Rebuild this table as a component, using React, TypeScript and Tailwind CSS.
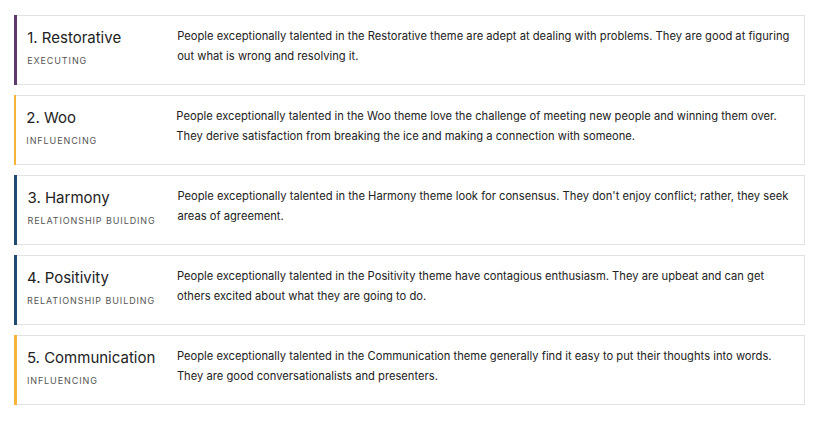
const themes = [
  {
    rank: 1,
    name: "Restorative",
    domain: "EXECUTING",
    bar: "bg-[#5e3a6e]",
    text: "People exceptionally talented in the Restorative theme are adept at dealing with problems. They are good at figuring out what is wrong and resolving it.",
  },
  {
    rank: 2,
    name: "Woo",
    domain: "INFLUENCING",
    bar: "bg-[#f6b53a]",
    text: "People exceptionally talented in the Woo theme love the challenge of meeting new people and winning them over. They derive satisfaction from breaking the ice and making a connection with someone.",
  },
  {
    rank: 3,
    name: "Harmony",
    domain: "RELATIONSHIP BUILDING",
    bar: "bg-[#1f4b73]",
    text: "People exceptionally talented in the Harmony theme look for consensus. They don't enjoy conflict; rather, they seek areas of agreement.",
  },
  {
    rank: 4,
    name: "Positivity",
    domain: "RELATIONSHIP BUILDING",
    bar: "bg-[#1f4b73]",
    text: "People exceptionally talented in the Positivity theme have contagious enthusiasm. They are upbeat and can get others excited about what they are going to do.",
  },
  {
    rank: 5,
    name: "Communication",
    domain: "INFLUENCING",
    bar: "bg-[#f6b53a]",
    text: "People exceptionally talented in the Communication theme generally find it easy to put their thoughts into words. They are good conversationalists and presenters.",
  },
];

function ThemeCard({ t }: { t: (typeof themes)[number] }) {
  return (
    <div className="flex h-[70px] border border-[#e2e2e2] bg-white">
      <div className={`w-[4px] -my-px -ml-px ${t.bar}`} />
      <div className="w-[160px] shrink-0 pl-[10px] pt-[12px]">
        <div className="text-[15px] leading-[20px] text-[#222]">
          {t.rank}. {t.name}
        </div>
        <div className="mt-[7px] text-[9px] leading-[12px] tracking-[0.1em] text-[#555]">{t.domain}</div>
      </div>
      <p className="pt-[10px] pr-[6px] text-[11.2px] leading-[20px] text-[#222]">{t.text}</p>
    </div>
  );
}

export default function App() {
  return (
    <div className="min-h-[427px] w-[823px] bg-white pl-[14px] pr-[18px] pt-[15px] font-['Inter',sans-serif]">
      <div className="flex flex-col gap-[10px]">
        {themes.map(t => (
          <ThemeCard key={t.rank} t={t} />
        ))}
      </div>
    </div>
  );
}
